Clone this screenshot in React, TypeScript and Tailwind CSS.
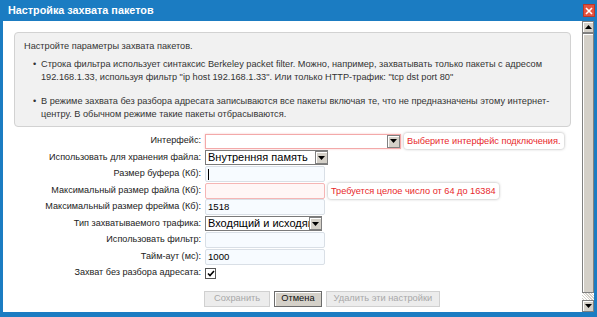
const font = { fontFamily: '"Liberation Sans", Arial, sans-serif' };

const Arrow = () => (
  <span className="flex h-full w-[13px] shrink-0 items-center justify-center border border-[#808080] bg-[#d4d0c8] shadow-[inset_1px_1px_0_#fff]">
    <svg width="7" height="4" viewBox="0 0 7 4">
      <path d="M0 0h7L3.5 4z" fill="#000" />
    </svg>
  </span>
);

const Select = ({ value, w, error }: { value: string; w: string; error?: boolean }) => (
  <div
    className={`flex h-[15px] ${w} items-center border bg-white ${
      error ? "border-[#f3a9a9] shadow-[0_0_2px_#f7c6c6]" : "border-[#7a7a7a] border-r-0"
    }`}
  >
    <span className="flex-1 overflow-hidden whitespace-nowrap pl-[2px] text-[11px] leading-none text-black">
      {value}
    </span>
    <Arrow />
  </div>
);

const Input = ({ value, error, caret }: { value?: string; error?: boolean; caret?: boolean }) => (
  <div
    className={`flex h-[16px] w-[120px] items-center rounded-[2px] border pl-[2px] text-[9.6px] leading-none text-black ${
      error ? "border-[#f5b5b5] bg-[#fff6f6]" : "border-[#d9dfe6] bg-[#f7fbff]"
    }`}
  >
    {caret && <span className="h-[11px] w-px bg-black" />}
    {value}
  </div>
);

const Tip = ({ text }: { text: string }) => (
  <span className="ml-[3px] whitespace-nowrap rounded-[3px] bg-white px-[3px] py-[2px] text-[9.2px] leading-[12px] text-[#e8282b] shadow-[0_0_3px_rgba(0,0,0,0.35)]">
    {text}
  </span>
);

const rows: { label: string; control: React.ReactNode }[] = [
  {
    label: "Интерфейс:",
    control: (
      <>
        <Select value="" w="w-[196px]" error />
        <Tip text="Выберите интерфейс подключения." />
      </>
    ),
  },
  { label: "Использовать для хранения файла:", control: <Select value="Внутренняя память" w="w-[123px]" /> },
  { label: "Размер буфера (Кб):", control: <Input caret /> },
  {
    label: "Максимальный размер файла (Кб):",
    control: (
      <>
        <Input error />
        <Tip text="Требуется целое число от 64 до 16384" />
      </>
    ),
  },
  { label: "Максимальный размер фрейма (Кб):", control: <Input value="1518" /> },
  { label: "Тип захватываемого трафика:", control: <Select value="Входящий и исходящий" w="w-[117px]" /> },
  { label: "Использовать фильтр:", control: <Input /> },
  { label: "Тайм-аут (мс):", control: <Input value="1000" /> },
  {
    label: "Захват без разбора адресата:",
    control: (
      <span className="flex h-[11px] w-[11px] items-center justify-center border border-[#555] bg-white">
        <svg width="8" height="7" viewBox="0 0 8 7">
          <path d="M1 3.5l2 2L7 1" stroke="#000" strokeWidth="1.6" fill="none" />
        </svg>
      </span>
    ),
  },
];

const App = () => {
  return (
    <div style={font} className="flex h-[317px] w-[597px] flex-col bg-[#1b7cc2]">
      <div className="flex h-[21px] shrink-0 items-center justify-between pl-[8px] pr-[2px]">
        <span className="text-[10.8px] font-bold text-white">Настройка захвата пакетов</span>
        <span className="flex h-[13px] w-[12px] items-center justify-center border border-[#b8382c] bg-[#e5533f]">
          <svg width="8" height="8" viewBox="0 0 8 8">
            <path d="M1 1l6 6M7 1L1 7" stroke="#fff" strokeWidth="1.6" />
          </svg>
        </span>
      </div>
      <div className="mx-[3px] mb-[5px] flex flex-1 overflow-hidden bg-white">
        <div className="flex flex-1 flex-col">
          <div className="mx-[11px] mt-[11px] h-[95px] rounded-[4px] border border-[#d2d2d2] bg-[#f1f1f1] px-[9px] pt-[7px] text-[9.2px] leading-[13px] text-[#333]">
            <p>Настройте параметры захвата пакетов.</p>
            <ul className="mt-[5px] flex flex-col gap-[11px] pl-[9px]">
              <li className="relative pl-[8px]">
                <span className="absolute left-0">•</span>
                Строка фильтра использует синтаксис Berkeley packet filter. Можно, например, захватывать только пакеты с адресом 192.168.1.33, используя фильтр "ip host 192.168.1.33". Или только HTTP-трафик: "tcp dst port 80"
              </li>
              <li className="relative pl-[8px]">
                <span className="absolute left-0">•</span>
                В режиме захвата без разбора адресата записываются все пакеты включая те, что не предназначены этому интернет-центру. В обычном режиме такие пакеты отбрасываются.
              </li>
            </ul>
          </div>
          <div className="mt-[6px] grid grid-cols-[198px_1fr] auto-rows-[16.5px] gap-x-[4px]">
            {rows.map((r) => (
              <div key={r.label} className="contents">
                <span className="flex items-center justify-end whitespace-nowrap text-[9.1px] text-[#222]">
                  {r.label}
                </span>
                <div className="flex items-center">{r.control}</div>
              </div>
            ))}
          </div>
          <div className="ml-[201px] mt-[9px] flex gap-[4px] text-[9.3px]">
            <span className="flex h-[16px] items-center border border-[#d0d0d0] bg-[#ececec] px-[9px] text-[#a8a8a8]">
              Сохранить
            </span>
            <span className="flex h-[16px] items-center border border-[#6b6b6b] bg-[#d4d0c8] px-[6px] text-[#111] shadow-[inset_1px_1px_0_#fff]">
              Отмена
            </span>
            <span className="flex h-[16px] items-center border border-[#d0d0d0] bg-[#ececec] px-[7px] text-[#a8a8a8]">
              Удалить эти настройки
            </span>
          </div>
        </div>
        <div className="flex w-[12px] flex-col bg-[#ebe9e4]">
          <span className="flex h-[12px] items-center justify-center border border-[#808080] bg-[#d4d0c8] shadow-[inset_1px_1px_0_#fff]">
            <svg width="7" height="4" viewBox="0 0 7 4">
              <path d="M0 4h7L3.5 0z" fill="#000" />
            </svg>
          </span>
          <span className="flex-1 border border-[#808080] bg-[#d4d0c8] shadow-[inset_1px_1px_0_#fff]" />
          <span className="h-[7px] bg-[repeating-linear-gradient(45deg,#fff_0_1px,#d4d0c8_1px_2px)]" />
          <span className="flex h-[12px] items-center justify-center border border-[#808080] bg-[#d4d0c8] shadow-[inset_1px_1px_0_#fff]">
            <svg width="7" height="4" viewBox="0 0 7 4">
              <path d="M0 0h7L3.5 4z" fill="#000" />
            </svg>
          </span>
        </div>
      </div>
    </div>
  );
};

export default App;
